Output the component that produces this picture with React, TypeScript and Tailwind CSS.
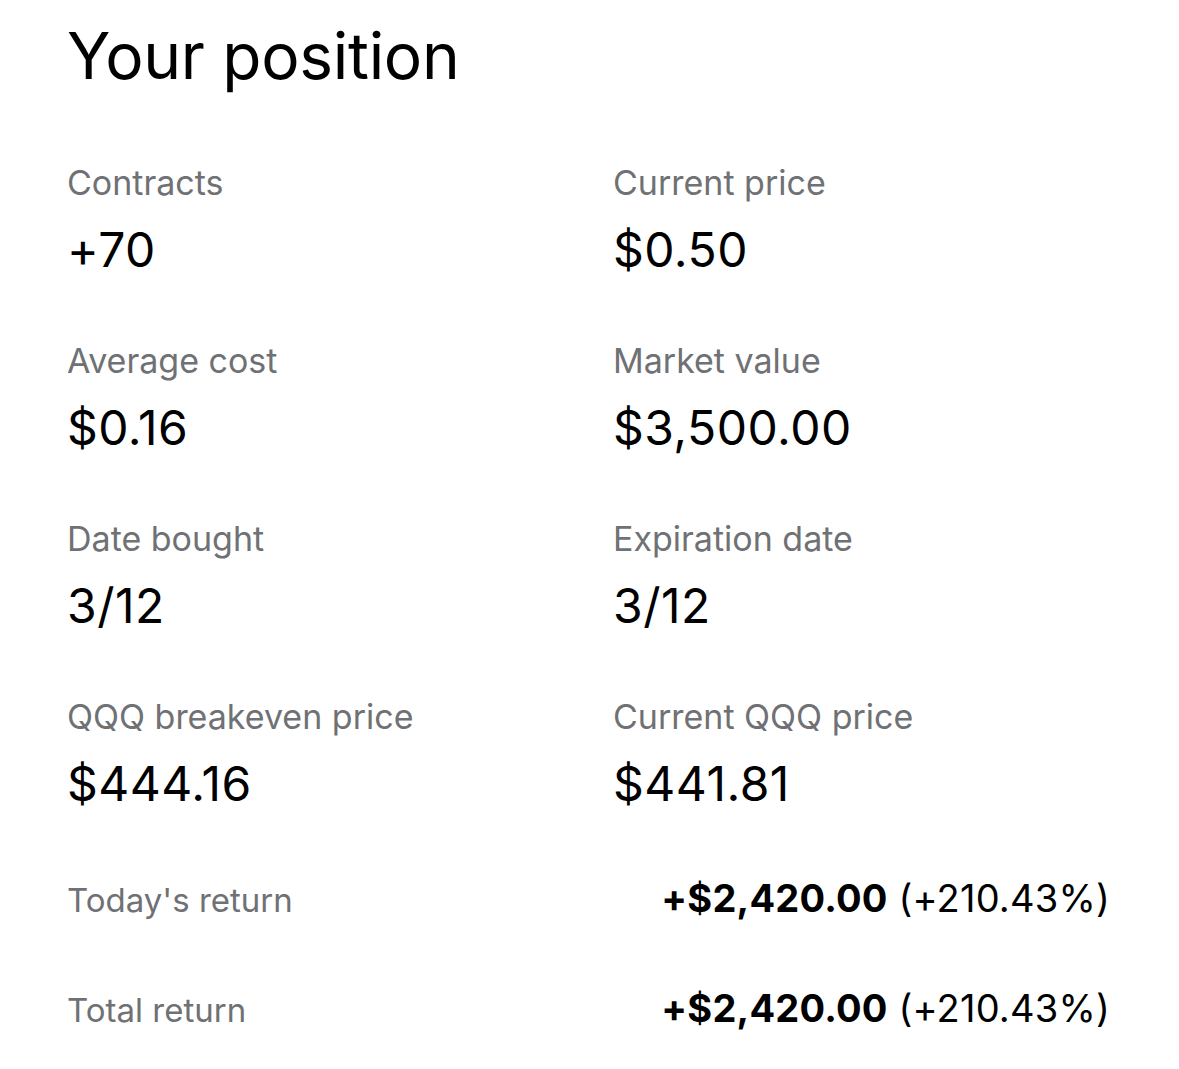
export default function App() {
  const cells: [string, string][] = [
    ["Contracts", "+70"],
    ["Current price", "$0.50"],
    ["Average cost", "$0.16"],
    ["Market value", "$3,500.00"],
    ["Date bought", "3/12"],
    ["Expiration date", "3/12"],
    ["QQQ breakeven price", "$444.16"],
    ["Current QQQ price", "$441.81"],
  ];
  const returns = [
    ["Today's return", "+$2,420.00", "(+210.43%)"],
    ["Total return", "+$2,420.00", "(+210.43%)"],
  ];
  return (
    <div
      className="w-[1179px] h-[1069px] bg-white text-black pl-[67px] pr-[69px] pt-[17px]"
      style={{ fontFamily: "Inter, 'Noto Sans', sans-serif" }}
    >
      <h1 className="text-[64px] leading-[78px] font-normal tracking-[-0.3px]">Your position</h1>
      <div className="grid grid-cols-[546px_1fr] mt-[68px] gap-y-[62px]">
        {cells.map(([label, value]) => (
          <div key={label} className="flex flex-col">
            <span className="text-[34px] leading-[40px] text-[#6f7174]">{label}</span>
            <span className="text-[48px] leading-[58px] mt-[18px] tracking-[0.5px]">{value}</span>
          </div>
        ))}
      </div>
      <div className="flex flex-col mt-[64px] gap-[66px]">
        {returns.map(([label, amt, pct]) => (
          <div key={label} className="flex justify-between items-baseline">
            <span className="text-[33px] leading-[42px] text-[#6f7174]">{label}</span>
            <span className="text-[38px] leading-[42px] tracking-[0.2px]">
              <span className="font-bold">{amt}</span> {pct}
            </span>
          </div>
        ))}
      </div>
    </div>
  );
}
